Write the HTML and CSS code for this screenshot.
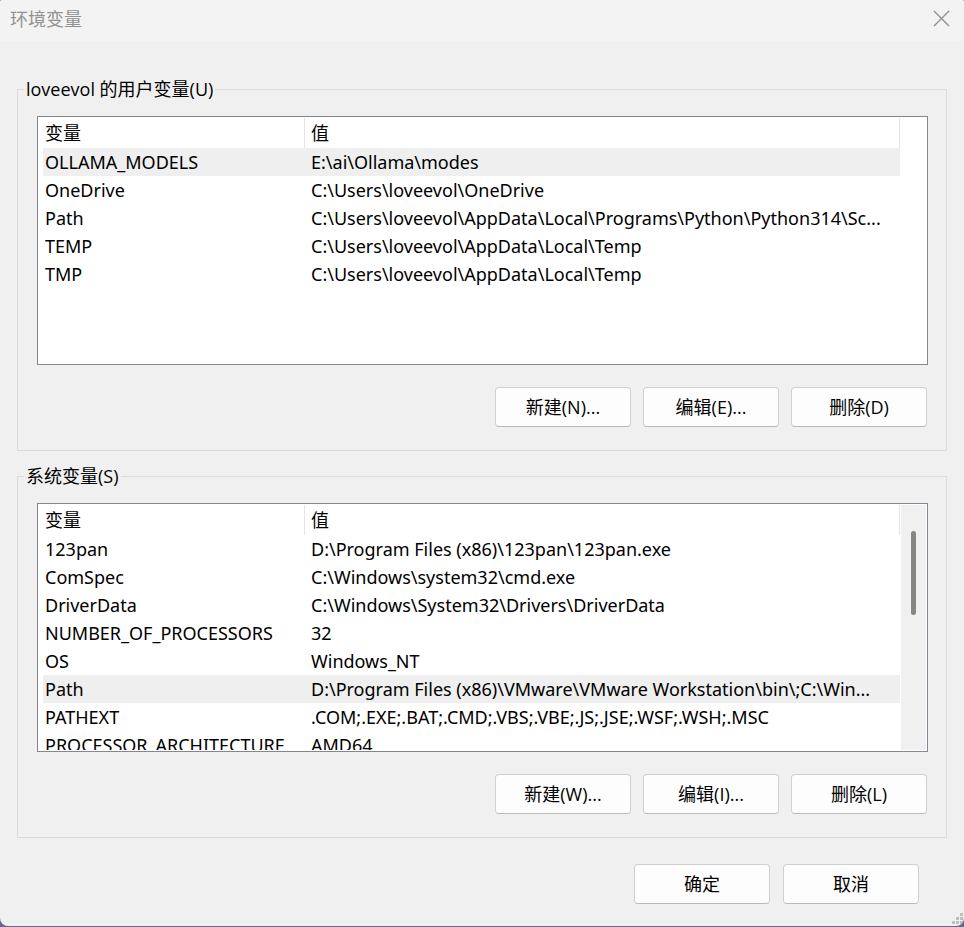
FILE: index.html
```
<!DOCTYPE html>
<html lang="zh-CN">
<head>
    <meta charset="UTF-8">
    <meta name="viewport" content="width=device-width, initial-scale=1.0">
    <title>环境变量</title>
    <link rel="stylesheet" href="styles.css">
</head>
<body>
    <div class="dialog">
        <header class="titlebar">
            <h1>环境变量</h1>
            <button type="button" class="close" aria-label="关闭">
                <svg width="17" height="17" viewBox="0 0 17 17"><path d="M1 1L16 16M16 1L1 16" fill="none" stroke="#8f8f8f" stroke-width="1.4"/></svg>
            </button>
        </header>
        <form class="content">
            <fieldset class="group">
                <legend>loveevol 的用户变量(U)</legend>
                <div class="list">
                    <div class="rows">
                        <table>
                            <thead>
                                <tr><th class="name">变量</th><th>值</th></tr>
                            </thead>
                            <tbody>
                                <tr class="selected"><td>OLLAMA_MODELS</td><td>E:\ai\Ollama\modes</td></tr>
                                <tr><td>OneDrive</td><td>C:\Users\loveevol\OneDrive</td></tr>
                                <tr><td>Path</td><td>C:\Users\loveevol\AppData\Local\Programs\Python\Python314\Sc...</td></tr>
                                <tr><td>TEMP</td><td>C:\Users\loveevol\AppData\Local\Temp</td></tr>
                                <tr><td>TMP</td><td>C:\Users\loveevol\AppData\Local\Temp</td></tr>
                            </tbody>
                        </table>
                    </div>
                    <div class="gutter"></div>
                </div>
                <div class="actions">
                    <button type="button">新建(N)...</button>
                    <button type="button">编辑(E)...</button>
                    <button type="button">删除(D)</button>
                </div>
            </fieldset>
            <fieldset class="group">
                <legend>系统变量(S)</legend>
                <div class="list">
                    <div class="rows">
                        <table>
                            <thead>
                                <tr><th class="name">变量</th><th>值</th></tr>
                            </thead>
                            <tbody>
                                <tr><td>123pan</td><td>D:\Program Files (x86)\123pan\123pan.exe</td></tr>
                                <tr><td>ComSpec</td><td>C:\Windows\system32\cmd.exe</td></tr>
                                <tr><td>DriverData</td><td>C:\Windows\System32\Drivers\DriverData</td></tr>
                                <tr><td>NUMBER_OF_PROCESSORS</td><td>32</td></tr>
                                <tr><td>OS</td><td>Windows_NT</td></tr>
                                <tr class="selected"><td>Path</td><td>D:\Program Files (x86)\VMware\VMware Workstation\bin\;C:\Win...</td></tr>
                                <tr><td>PATHEXT</td><td>.COM;.EXE;.BAT;.CMD;.VBS;.VBE;.JS;.JSE;.WSF;.WSH;.MSC</td></tr>
                                <tr><td>PROCESSOR_ARCHITECTURE</td><td>AMD64</td></tr>
                            </tbody>
                        </table>
                    </div>
                    <div class="gutter scrollbar"><div class="thumb"></div></div>
                </div>
                <div class="actions">
                    <button type="button">新建(W)...</button>
                    <button type="button">编辑(I)...</button>
                    <button type="button">删除(L)</button>
                </div>
            </fieldset>
            <div class="footer">
                <button type="submit">确定</button>
                <button type="button">取消</button>
            </div>
        </form>
        <svg class="grip" width="11" height="11" viewBox="0 0 11 11" fill="#bfbfbf">
            <path d="M8 0h3v3h-3zM4 4h3v3h-3zM8 4h3v3h-3zM0 8h3v3h-3zM4 8h3v3h-3zM8 8h3v3h-3z"/>
        </svg>
    </div>
</body>
</html>
```
FILE: styles.css
```
* {
    box-sizing: border-box;
}

body {
    margin: 0;
    padding-bottom: 1px;
    background-color: #66698a;
    color: #000;
    font-family: "Segoe UI", "Open Sans", "Noto Sans CJK SC", sans-serif;
    font-size: 18px;
    line-height: 24px;
}

.dialog {
    position: relative;
    min-height: calc(100vh - 1px);
    background-color: #f0f0f0;
    border-radius: 2px 2px 8px 8px;
    overflow: hidden;
}

.titlebar {
    display: flex;
    align-items: center;
    justify-content: space-between;
    height: 41px;
    padding: 0 14px 4px 10px;
    background-color: #f3f3f3;
}

h1 {
    margin: 0;
    font-size: 18px;
    font-weight: normal;
    color: #929292;
}

button {
    width: 136px;
    height: 40px;
    padding: 0;
    background-color: #fdfdfd;
    border: 1px solid #d0d0d0;
    border-bottom-color: #bababa;
    border-radius: 4px;
    color: #000;
    font: inherit;
}

.close {
    display: flex;
    width: auto;
    height: auto;
    background: none;
    border: none;
}

.content {
    padding: 36px 17px 22px;
}

.group {
    min-width: 0;
    margin: 0 0 13px;
    padding: 15px 18px 23px 19px;
    border: 1px solid #dcdcdc;
}

legend {
    margin-left: -13px;
    padding: 0 2px;
}

.list {
    display: flex;
    height: 249px;
    padding: 1px;
    background-color: #fff;
    border: 1px solid #828790;
}

.rows {
    flex: 1;
    min-width: 0;
    padding-left: 4px;
    overflow: hidden;
}

.gutter {
    width: 26px;
}

.scrollbar {
    padding: 26px 10px;
    background-color: #f0f0f0;
    border-left: 1px solid #fff;
}

.thumb {
    width: 5px;
    height: 84px;
    background-color: #868686;
    border-radius: 3px;
}

table {
    width: 100%;
    table-layout: fixed;
    border-spacing: 0;
    font-family: "Segoe UI", "Noto Sans", "Noto Sans CJK SC", sans-serif;
}

th,
td {
    height: 28px;
    padding: 0 0 0 6px;
    text-align: left;
    font-weight: normal;
    white-space: nowrap;
}

th {
    height: 30px;
    border-right: 1px solid #e5e5e5;
}

th:first-child,
td:first-child {
    padding-left: 2px;
}

.name {
    width: 262px;
}

.selected td {
    background-color: #efefef;
}

.actions,
.footer {
    display: flex;
    justify-content: flex-end;
    gap: 12px;
}

.actions {
    padding: 22px 1px 0 0;
}

.footer {
    gap: 13px;
    padding: 13px 28px 0 0;
}

.grip {
    position: absolute;
    right: 1px;
    bottom: 2px;
}
```
